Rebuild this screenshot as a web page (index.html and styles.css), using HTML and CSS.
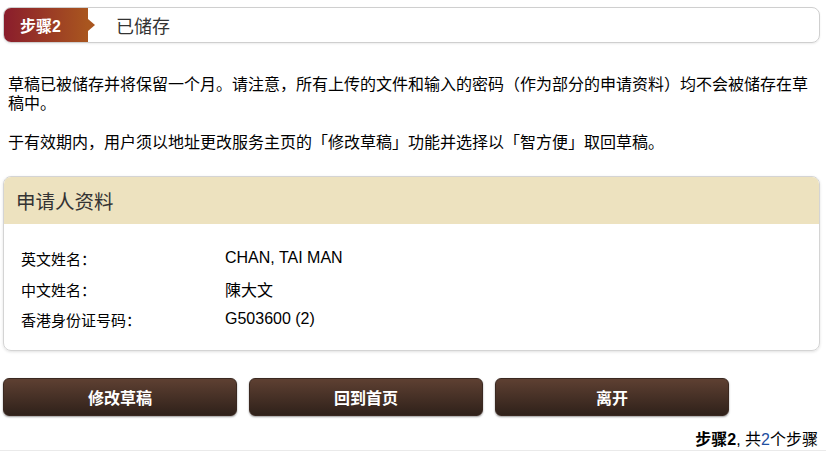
FILE: index.html
```html
<!DOCTYPE html>
<html lang="zh-CN">
<head>
  <meta charset="UTF-8" />
  <title>已储存</title>
  <link rel="stylesheet" href="styles.css">
</head>
<body>
  <div class="page">
    <div class="step-bar">
      <div class="step-badge">步骤2</div>
      <div class="step-title">已储存</div>
    </div>

    <div class="notes">
      <p>草稿已被储存并将保留一个月。请注意，所有上传的文件和输入的密码（作为部分的申请资料）均不会被储存在草稿中。</p>
      <p>于有效期内，用户须以地址更改服务主页的「修改草稿」功能并选择以「智方便」取回草稿。</p>
    </div>

    <div class="panel">
      <div class="panel-head">申请人资料</div>
      <div class="panel-body">
        <div class="row first"><span class="label">英文姓名：</span><span class="value">CHAN, TAI MAN</span></div>
        <div class="row"><span class="label">中文姓名：</span><span class="value">陳大文</span></div>
        <div class="row"><span class="label">香港身份证号码：</span><span class="value">G503600 (2)</span></div>
      </div>
    </div>

    <div class="actions">
      <button class="btn">修改草稿</button>
      <button class="btn">回到首页</button>
      <button class="btn">离开</button>
    </div>

    <div class="step-count"><b>步骤2</b>, 共<span class="num">2</span>个步骤</div>
  </div>
  <div class="bottom-strip"></div>
</body>
</html>
```

FILE: styles.css
```css
body {
  margin: 0;
  font-family: "Liberation Sans", Arial, "Noto Sans CJK SC", sans-serif;
  font-size: 16px;
  color: #000;
  background: #fff;
}
.page {
  padding: 7px 6px 0 3px;
}
.step-bar {
  display: flex;
  align-items: center;
  height: 34px;
  border: 1px solid #cfcfcf;
  border-radius: 8px;
  box-shadow: 0 1px 2px rgba(0,0,0,0.08);
}
.step-badge {
  position: relative;
  height: 100%;
  width: 68px;
  padding-left: 16px;
  display: flex;
  align-items: center;
  color: #fff;
  font-weight: bold;
  font-size: 16px;
  border-radius: 7px 0 0 7px;
  background: linear-gradient(to right, #8a1d2c, #a9561f);
}
.step-badge::after {
  content: "";
  position: absolute;
  right: -7px;
  top: 11px;
  border-left: 7px solid #a9561f;
  border-top: 6px solid transparent;
  border-bottom: 6px solid transparent;
}
.step-title {
  margin-left: 28px;
  font-size: 18px;
  color: #333;
}
.notes {
  padding: 32px 5px 0 5px;
}
.notes p {
  margin: 0 0 20px;
  line-height: 19px;
}
.panel {
  margin-top: 24px;
  border: 1px solid #d4d4d4;
  border-radius: 8px;
  overflow: hidden;
  box-shadow: 0 1px 3px rgba(0,0,0,0.12);
}
.panel-head {
  background: #ede2bf;
  height: 47px;
  display: flex;
  align-items: center;
  padding-left: 12px;
  font-size: 19.5px;
  color: #333;
}
.panel-body {
  padding: 18px 18px 16px 17px;
}
.row {
  display: flex;
  align-items: center;
  height: 30px;
}
.row.first {
  height: 32px;
}
.label {
  width: 204px;
  font-size: 15px;
}
.value {
  font-size: 16px;
}
.actions {
  display: flex;
  gap: 12px;
  margin-top: 27px;
}
.btn {
  width: 234px;
  height: 38px;
  border: 1px solid #3a2820;
  border-radius: 6px;
  background: linear-gradient(#5e4032, #2f211a);
  box-shadow: 0 1px 2px rgba(0,0,0,0.4);
  color: #fff;
  font-family: "Noto Sans CJK SC", sans-serif;
  font-weight: bold;
  font-size: 16px;
  cursor: pointer;
}
.step-count {
  text-align: right;
  margin-top: 14px;
  padding-right: 2px;
  font-size: 16px;
  line-height: 20px;
}
.step-count .num {
  color: #1f4fa0;
}
.bottom-strip {
  height: 4px;
  background: #eaeaea;
}
```
